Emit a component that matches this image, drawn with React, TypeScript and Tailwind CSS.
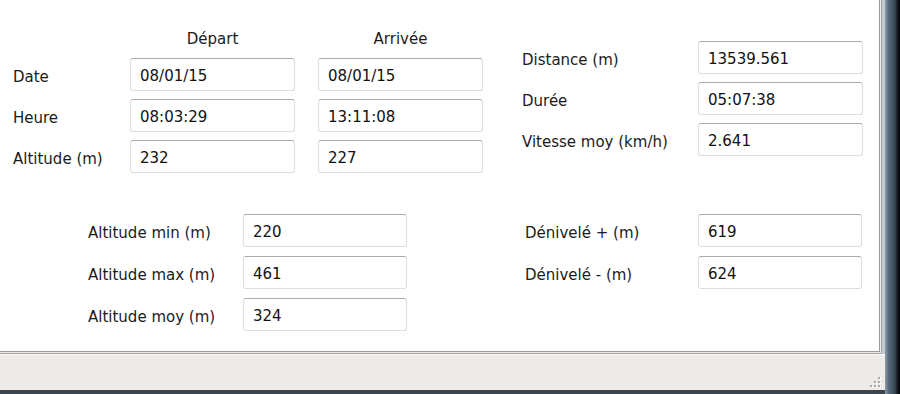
import React from 'react';

function Field({ value, width = 'w-[165px]' }: { value: string; width?: string }) {
  return (
    <div
      className={`${width} h-[33px] shrink-0 flex items-center pl-[9px] pt-[4px] bg-white border border-[#dadee3] border-t-[#a9acb1] rounded-[3px] text-[#111] whitespace-nowrap`}
    >
      {value}
    </div>
  );
}

function Row({ label, labelW, children }: { label: string; labelW: string; children: React.ReactNode }) {
  return (
    <div className="flex items-center">
      <div className={`${labelW} shrink-0 pt-[5px] text-[#1b1b1b] whitespace-nowrap`}>{label}</div>
      {children}
    </div>
  );
}

// triangle of grip dots in the status bar corner
function Grip() {
  const dots = [
    [10, 1],
    [6, 5],
    [10, 5],
    [2, 9],
    [6, 9],
    [10, 9],
  ];
  return (
    <svg width="14" height="13" viewBox="0 0 14 13">
      {dots.map(([x, y], i) => (
        <g key={i}>
          <rect x={x + 1} y={y + 1} width="2" height="2" fill="#ffffff" />
          <rect x={x} y={y} width="2" height="2" fill="#a9a9a9" />
        </g>
      ))}
    </svg>
  );
}

export default function App() {
  return (
    <div className="w-[900px] h-[394px] flex overflow-hidden bg-white font-['DejaVu_Sans',sans-serif] text-[15px] leading-none">
      <div className="w-[885px] h-full flex flex-col">
        {/* main panel */}
        <div className="h-[354px] flex">
          <div className="w-[882px] h-full bg-white border-r border-b border-[#a3a3a3] flex flex-col">
            <div className="flex-1 border-r border-b border-[#ececec] flex flex-col">
              <div className="flex-1 border-r border-b border-[#9a9a9a] flex flex-col">
                {/* top section */}
                <div className="flex items-start pl-[13px]">
                  <div className="flex flex-col pt-[28px]">
                    <div className="flex h-[20px] items-center pt-[3px] text-[#1b1b1b]">
                      <div className="w-[117px]" />
                      <div className="w-[165px] text-center">Départ</div>
                      <div className="w-[23px]" />
                      <div className="w-[165px] text-center">Arrivée</div>
                    </div>
                    <div className="mt-[10px] flex flex-col gap-[8px]">
                      <Row label="Date" labelW="w-[117px]">
                        <Field value="08/01/15" />
                        <div className="w-[23px]" />
                        <Field value="08/01/15" />
                      </Row>
                      <Row label="Heure" labelW="w-[117px]">
                        <Field value="08:03:29" />
                        <div className="w-[23px]" />
                        <Field value="13:11:08" />
                      </Row>
                      <Row label="Altitude (m)" labelW="w-[117px]">
                        <Field value="232" />
                        <div className="w-[23px]" />
                        <Field value="227" />
                      </Row>
                    </div>
                  </div>
                  <div className="ml-[39px] pt-[41px] flex flex-col gap-[8px]">
                    <Row label="Distance (m)" labelW="w-[176px]">
                      <Field value="13539.561" />
                    </Row>
                    <Row label="Durée" labelW="w-[176px]">
                      <Field value="05:07:38" />
                    </Row>
                    <Row label="Vitesse moy (km/h)" labelW="w-[176px]">
                      <Field value="2.641" />
                    </Row>
                  </div>
                </div>

                {/* bottom section */}
                <div className="flex items-start pl-[88px] mt-[41px]">
                  <div className="flex flex-col gap-[9px]">
                    <Row label="Altitude min (m)" labelW="w-[155px]">
                      <Field value="220" width="w-[164px]" />
                    </Row>
                    <Row label="Altitude max (m)" labelW="w-[155px]">
                      <Field value="461" width="w-[164px]" />
                    </Row>
                    <Row label="Altitude moy (m)" labelW="w-[155px]">
                      <Field value="324" width="w-[164px]" />
                    </Row>
                  </div>
                  <div className="ml-[118px] flex flex-col gap-[9px]">
                    <Row label="Dénivelé + (m)" labelW="w-[173px]">
                      <Field value="619" width="w-[164px]" />
                    </Row>
                    <Row label="Dénivelé - (m)" labelW="w-[173px]">
                      <Field value="624" width="w-[164px]" />
                    </Row>
                  </div>
                </div>
              </div>
            </div>
          </div>
          <div className="flex-1 bg-[#c3cad1]" />
        </div>

        {/* status bar */}
        <div className="h-[36px] bg-[#edeae8] border-t border-[#fafafa] flex items-end justify-end pr-[3px] pb-[1px]">
          <Grip />
        </div>
        <div className="h-[4px] bg-[#3b4650]" />
      </div>

      {/* window frame */}
      <div className="flex-1 h-full bg-[linear-gradient(to_right,#8d9ca8,#56687a_25%,#3a4956_65%,#111418_85%,#050505)]" />
    </div>
  );
}
